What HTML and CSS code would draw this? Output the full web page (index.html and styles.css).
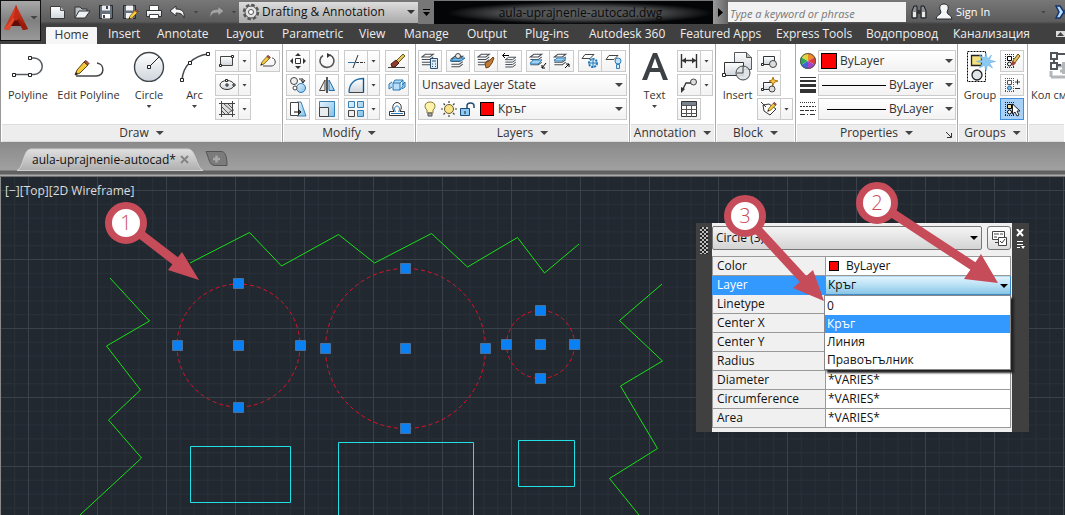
FILE: index.html
```html
<!DOCTYPE html>
<html lang="en">
<head>
<meta charset="utf-8">
<title>aula-uprajnenie-autocad.dwg</title>
<link rel="stylesheet" href="styles.css">
</head>
<body>
<svg class="defs" aria-hidden="true">
  <defs>
    <linearGradient id="steel" x1="0" y1="0" x2="0" y2="1"><stop offset="0" stop-color="#fff"/><stop offset="1" stop-color="#cfd5dc"/></linearGradient>
    <linearGradient id="sky" x1="0" y1="0" x2="1" y2="1"><stop offset="0" stop-color="#e6f4fd"/><stop offset="1" stop-color="#7fc0ea"/></linearGradient>
    <linearGradient id="flame" x1="0" y1="0" x2="1" y2="1"><stop offset="0" stop-color="#f2502e"/><stop offset="1" stop-color="#8c1206"/></linearGradient>
    <symbol id="pencil" viewBox="0 0 16 16"><path d="M1 15l2-5 7-8 4 3-8 8z" fill="#f3c93b" stroke="#5a4410"/><path d="M10 2l2-1.500 3 3-1.500 1.500z" fill="#b5584a" stroke="#5a2a20"/><path d="M1 15l1-3 2 2z" fill="#222"/></symbol>
    <symbol id="layers" viewBox="0 0 16 16"><path d="M5 1.500h9l-4 3H1zM1 7.500h9l4-3M1 10.500h9l4-3M1 13.500h9l4-3" fill="none" stroke="#444b52" stroke-width="1.200"/></symbol>
    <pattern id="grid" width="69" height="69" x="28" y="13" patternUnits="userSpaceOnUse">
      <path d="M14.300 0v69M28.100 0v69M41.900 0v69M55.700 0v69M0 14.300h69M0 28.100h69M0 41.900h69M0 55.700h69" stroke="#282f38"/>
      <path d="M.5 0v69M0 .5h69" stroke="#39414a"/>
    </pattern>
  </defs>
</svg>

<header class="top">
  <button class="app" aria-label="Application menu"><svg width="24" height="26" viewBox="0 0 24 26"><path d="M12 0L0 24l5 1 2-4h10l2 4 5-1z" fill="url(#flame)"/><path d="M12 0l-4 14-8 10 5 1 7-12z" fill="#e2472c"/><path d="M12 0l3 14 9 10-5 1-7-12z" fill="#9a1a0c"/><path d="M12 13l-5 8h10z" fill="#5f0d06"/><path d="M12 0L9 13l3 3 3-3z" fill="#c52a17"/></svg><i class="caret"></i></button>
  <div class="titlebar">
    <div class="quick">
      <button aria-label="New"><svg width="18" height="16"><path d="M1.500 2.500h10l4 4v8h-14z" fill="url(#steel)" stroke="#3a3a3a"/><path d="M11.500 2.500v4h4" fill="#bbb" stroke="#555"/></svg></button>
      <button aria-label="Open"><svg width="18" height="16"><path d="M2 14V3h5l2 2h5v3" fill="#b9c0c8" stroke="#333"/><path d="M2 14l4-7h11l-5 7z" fill="#eef1f4" stroke="#333"/></svg></button>
      <button aria-label="Save"><svg width="18" height="16"><path d="M2.500 1.500h13v13h-13z" fill="#65707c" stroke="#25292e"/><path d="M5 1.500h8v5H5z" fill="#eee"/><path d="M5 10h8v4.500H5z" fill="#fff"/><path d="M6 11h2v3H6zM9 2h2v3H9z" fill="#3d4650"/></svg></button>
      <button aria-label="Save as"><svg width="18" height="16"><path d="M2.500 1.500h12v13h-12z" fill="#65707c" stroke="#25292e"/><path d="M5 1.500h7v5H5zM5 9h7v5.500H5z" fill="#f4f4f4"/><use href="#pencil" x="7" y="5" width="11" height="11"/></svg></button>
      <button aria-label="Print"><svg width="18" height="16"><path d="M4.500 1.500h9v5h-9z" fill="#fff" stroke="#444"/><path d="M1.500 6.500h15v6h-15z" fill="url(#steel)" stroke="#333"/><path d="M4.500 10.500h9v4h-9z" fill="#fff" stroke="#444"/></svg></button>
      <button aria-label="Undo"><svg width="18" height="16"><path d="M1 7l6-5v3c6 0 9 3 8 9-1-4-4-5-8-5v3z" fill="#f2f4f6" stroke="#333"/></svg></button>
      <button class="tiny" aria-label="Undo list"><i class="caret small"></i></button>
      <button aria-label="Redo"><svg width="18" height="16"><path d="M17 7l-6-5v3c-6 0-9 3-8 9 1-4 4-5 8-5v3z" fill="#a4a4a4" stroke="#666"/></svg></button>
      <button class="tiny" aria-label="Redo list"><i class="caret small"></i></button>
    </div>
    <label class="workspace"><svg width="18" height="18" viewBox="0 0 18 18"><circle cx="9" cy="9" r="7" fill="none" stroke="#555" stroke-width="2.500" stroke-dasharray="3.500 2"/><circle cx="9" cy="9" r="6" fill="#e2e2e2" stroke="#555"/><circle cx="9" cy="9" r="2.500" fill="#fff" stroke="#555"/></svg><select aria-label="Workspace"><option>Drafting &amp; Annotation</option></select></label>
    <button class="customize" aria-label="Customize toolbar"><svg width="7" height="8"><path d="M0 1.500h7" stroke="#000"/><path d="M0 4h7L3.500 8z" fill="#000"/></svg></button>
    <h1 class="file">aula-uprajnenie-autocad.dwg</h1>
    <button class="next" aria-label="Expand search"><svg width="5" height="9"><path d="M0 0l5 4.500L0 9z"/></svg></button>
    <input class="search" type="search" placeholder="Type a keyword or phrase" aria-label="Search">
    <div class="account">
      <button aria-label="Find"><svg width="18" height="16"><path d="M2 14V7l2-5h3v12zM11 14V2h3l2 5v7z" fill="#8b8f94" stroke="#15181b"/><path d="M3 8h3v5H3zM12 8h3v5h-3z" fill="#e8e8e8"/><path d="M7 6h4v4H7z" fill="#333"/></svg></button>
      <button class="signin"><svg width="18" height="18"><path d="M6 9C3 3 6 1 9 1s6 2 3 8c0 3 5 3 5 7H1c0-4 5-4 5-7z" fill="#f3f5f7" stroke="#24282c"/></svg>Sign In</button>
      <button class="tiny end" aria-label="Account menu"><i class="caret small"></i></button>
      <button class="exchange" aria-label="Exchange"><svg width="14" height="14"><path d="M1 1h4l4 6-4 6H1l3-6z" fill="#b9dcff" stroke="#12366a" stroke-width="1.500"/><path d="M14 1h-2L9 7l3 6h2z" fill="#4c86cf" stroke="#12366a"/></svg></button>
    </div>
  </div>
  <nav class="tabs">
    <a class="on" href="#">Home</a><a href="#">Insert</a><a href="#">Annotate</a><a href="#">Layout</a><a href="#">Parametric</a><a href="#">View</a><a href="#">Manage</a><a href="#">Output</a><a href="#">Plug-ins</a><a href="#">Autodesk 360</a><a href="#">Featured Apps</a><a href="#">Express Tools</a><a href="#">Водопровод</a><a href="#">Канализация</a>
    <button class="fold" aria-label="Minimize ribbon"><svg width="7" height="4"><path d="M0 4h7L3.500 0z" fill="#444"/></svg></button>
  </nav>
</header>

<main>
<div class="ribbon">
  <section class="panel">
    <div class="body draw">
      <button class="big"><svg width="34" height="32"><path d="M3 24.500h16M19 8h4a8 8 0 0 1 0 16.500h-4" fill="none" stroke="#555b61" stroke-width="1.500"/><path d="M1.500 23.500h3v3h-3zM17.500 23.500h3v3h-3zM17.500 6.500h3v3h-3z" fill="#fff" stroke="#222"/></svg>Polyline</button>
      <button class="big"><svg width="34" height="32"><path d="M4 26h20c9 0 9-12 1-13" fill="none" stroke="#444" stroke-width="1.500"/><use href="#pencil" x="2" y="10" width="16" height="16"/></svg>Edit Polyline</button>
      <button class="big"><svg width="34" height="32"><circle cx="17" cy="17" r="14.500" fill="url(#steel)" stroke="#3f454b" stroke-width="1.400"/><path d="M17 17L27 7" stroke="#222"/><path d="M15.500 15.500h3v3h-3z" fill="#fff" stroke="#222"/></svg>Circle<i class="caret small"></i></button>
      <button class="big"><svg width="34" height="32"><path d="M4 30C5 16 15 6 30 4" fill="none" stroke="#444a50" stroke-width="1.500"/><path d="M2.500 28.500h3v3h-3zM10.500 11.500h3v3h-3zM28.500 2.500h3v3h-3z" fill="#fff" stroke="#222"/></svg>Arc<i class="caret small"></i></button>
      <div class="stack">
        <div class="split"><button aria-label="Rectangle"><svg width="18" height="16"><path d="M2.500 3.500h12v9h-12z" fill="url(#steel)" stroke="#444"/><path d="M1.500 11.500h2v2h-2zM13.500 2.500h2v2h-2z" fill="#fff" stroke="#222"/></svg></button><button aria-label="Rectangle list"><i class="caret small"></i></button></div>
        <div class="split"><button aria-label="Ellipse"><svg width="18" height="16"><ellipse cx="9" cy="8" rx="7" ry="4.500" fill="url(#steel)" stroke="#333"/><path d="M9 6v4M7 8h4" stroke="#222"/><path d="M7.500 2.500h2v2h-2zM15 7h2v2h-2z" fill="#fff" stroke="#222"/></svg></button><button aria-label="Ellipse list"><i class="caret small"></i></button></div>
        <div class="split"><button aria-label="Hatch"><svg width="18" height="16"><path d="M3.500 0v16M14.500 0v16M1 2.500h16M1 13.500h16" stroke="#444"/><path d="M4 3h10v6l-4 4H4z" fill="#ddd"/><path d="M4 6l7 7M4 10l3 3M6 3l8 7M10 3l4 4M10 13c1-2 3-3 6-4" stroke="#555" fill="none"/></svg></button><button aria-label="Hatch list"><i class="caret small"></i></button></div>
      </div>
      <div class="stack"><button class="tool" aria-label="Edit polyline"><svg width="18" height="16"><path d="M4 13h8c6 0 5-8 1-8" fill="none" stroke="#444"/><use href="#pencil" x="1" y="2" width="11" height="11"/></svg></button></div>
    </div>
    <h2>Draw <i class="caret"></i></h2>
  </section>

  <section class="panel">
    <div class="body modify">
      <div class="stack">
        <button class="tool" aria-label="Move"><svg width="18" height="16"><path d="M6.500 5.500h5v5h-5z" fill="#fff" stroke="#333"/><path d="M9 0l3 3H6zM9 16l3-3H6zM1 8l3-3v6zM17 8l-3-3v6z" fill="#333"/></svg></button>
        <button class="tool" aria-label="Copy"><svg width="18" height="16"><circle cx="5" cy="4" r="3.500" fill="#eee" stroke="#444"/><circle cx="12" cy="11" r="4.500" fill="url(#sky)" stroke="#2a78b4"/><circle cx="6" cy="11" r="2" fill="#fff" stroke="#444"/><path d="M10 2h4v3M12 3l2 3 2-3" fill="none" stroke="#222"/></svg></button>
        <button class="tool" aria-label="Stretch"><svg width="18" height="16"><path d="M8 1h4l5 14H8z" fill="url(#sky)" stroke="#3c83b8"/><path d="M1.500 1.500h8v13h-8z" fill="#fff" stroke="#444"/><path d="M5 11h6M9 8.500l3 2.500-3 2.500" fill="none" stroke="#000"/></svg></button>
      </div>
      <div class="stack">
        <button class="tool" aria-label="Rotate"><svg width="18" height="16"><path d="M5 2.500a7 6.500 0 1 0 7-.5" fill="none" stroke="#555" stroke-width="1.600"/><path d="M9 0v5l4-3z" fill="#333"/></svg></button>
        <button class="tool" aria-label="Mirror"><svg width="18" height="16"><path d="M7 3v10.500H1.500z" fill="#eee" stroke="#444"/><path d="M11 3v10.500h5.500z" fill="url(#sky)" stroke="#236ea8"/><path d="M9 0v16" stroke="#222" stroke-width="1.500"/></svg></button>
        <button class="tool" aria-label="Scale"><svg width="18" height="16"><path d="M1.500.5h15v15h-15z" fill="url(#sky)" stroke="#357fb5"/><path d="M1.500 6.500h9v9h-9z" fill="#e9edf0" stroke="#444"/></svg></button>
      </div>
      <div class="stack">
        <div class="split"><button aria-label="Trim"><svg width="18" height="16"><path d="M1 9.500h7" stroke="#2676b5"/><path d="M9 9.500h9" stroke="#333" stroke-dasharray="3 1"/><path d="M6 15l5-13" stroke="#333"/></svg></button><button aria-label="Trim list"><i class="caret small"></i></button></div>
        <div class="split"><button aria-label="Fillet"><svg width="18" height="16"><path d="M2 15.500C2 6 8 1.500 16.500 1.500v14" fill="url(#steel)" stroke="#2470a8" stroke-width="1.400"/><path d="M16.500 1v14.500H2" fill="none" stroke="#444"/></svg></button><button aria-label="Fillet list"><i class="caret small"></i></button></div>
        <div class="split"><button aria-label="Array"><svg width="18" height="16"><path d="M1.500.5h6v6h-6zM10.500.5h6v6h-6zM10.500 9.500h6v6h-6z" fill="url(#sky)" stroke="#357fb5"/><path d="M1.500 9.500h6v6h-6z" fill="#eee" stroke="#444"/></svg></button><button aria-label="Array list"><i class="caret small"></i></button></div>
      </div>
      <div class="stack">
        <button class="tool" aria-label="Erase"><svg width="18" height="16"><path d="M0 14.500h17" stroke="#444"/><path d="M8 8l7-7 2 2-7 7z" fill="#e3c65f" stroke="#6b5520"/><path d="M3 11l5-4 3 3-4 4H4z" fill="#8e3b2d" stroke="#4a1c14"/></svg></button>
        <button class="tool" aria-label="Explode"><svg width="18" height="16"><path d="M5 6h7v7H5zM5 6l2-3h8l-3 3M12 13l3-4V3M4 5L1 7v5l3-2M14 8l3-3v5l-3 2" fill="#b9defa" stroke="#2676b5"/></svg></button>
        <button class="tool" aria-label="Offset"><svg width="18" height="16"><path d="M1.500 14.500h15v-4h-4.500c3-5 0-9-3-9s-6 4-3 9H1.500z" fill="#fff" stroke="#333"/><path d="M3 12.500h12M7.500 11c-2-3-.5-6 1.500-6s3.500 3 1.500 6" fill="none" stroke="#2676b5"/></svg></button>
      </div>
    </div>
    <h2>Modify <i class="caret"></i></h2>
  </section>

  <section class="panel">
    <div class="body layers">
      <div class="line">
        <button class="tool" aria-label="Layer properties"><svg width="18" height="16"><use href="#layers" width="14" height="14"/><path d="M9.500 5.500h7v10h-7z" fill="#dcecf8" stroke="#2b4f70"/><path d="M11 8h4M11 11h1m2 0h1m-4 2.500h1m2 0h1" stroke="#2b4f70"/></svg></button>
        <button class="tool" aria-label="Make current"><svg width="18" height="16"><use href="#layers" x="1" y="2" width="15" height="14"/><path d="M5 5h11l-4 3H1z" fill="#74bdee" stroke="#236ea8"/><circle cx="9" cy="3" r="2.500" fill="#eee" stroke="#444"/></svg></button>
        <div class="pair"><button class="tool" aria-label="Match layer"><svg width="18" height="16"><use href="#layers" width="14" height="14"/><path d="M8 10l4-2 4-4 1 1-2 5-3 4-3 1z" fill="#c07a31" stroke="#74410f"/></svg></button><button class="tool" aria-label="Previous layer"><svg width="18" height="16"><use href="#layers" x="3" y="3" width="14" height="13"/><path d="M2 2.500h6M4 0L1.500 2.500 4 5" fill="none" stroke="#000"/></svg></button></div>
        <div class="pair"><button class="tool" aria-label="Isolate"><svg width="18" height="16"><use href="#layers" width="15" height="14"/><path d="M4 7h9l-4 4H1z" fill="#9dd2f5" stroke="#3a87bf"/><path d="M17 10l-4 5m0-3v3h3" fill="none" stroke="#000"/></svg></button><button class="tool" aria-label="Unisolate"><svg width="18" height="16"><use href="#layers" width="15" height="14"/><path d="M4 5h9l-4 3H1z" fill="#9dd2f5" stroke="#3a87bf"/><path d="M12 15l4-4m-3 0h3v3" fill="none" stroke="#000"/></svg></button></div>
        <div class="pair"><button class="tool" aria-label="Freeze"><svg width="18" height="16"><path d="M4 1.500h9l-4 4H1z" fill="#fff" stroke="#444"/><circle cx="12" cy="10" r="4" fill="#d9effc" stroke="#2676b5" stroke-width="2" stroke-dasharray="2 1"/><path d="M12 5v10M7 10h10" stroke="#2676b5"/></svg></button><button class="tool" aria-label="Layer off"><svg width="18" height="16"><path d="M4 2.500h9l-4 4H1z" fill="#fff" stroke="#444"/><circle cx="13" cy="8" r="3" fill="#bfe2fa" stroke="#2e7cb5"/><path d="M11.500 11.500h3v4h-3z" fill="#d9effc" stroke="#2e7cb5"/></svg></button></div>
      </div>
      <label class="combo"><select aria-label="Layer state"><option>Unsaved Layer State</option></select></label>
      <label class="combo"><svg width="54" height="18"><path d="M8 2c-6 0-6 6-3 8v3h6v-3c3-2 3-8-3-8z" fill="#fff3ab" stroke="#8b7a38"/><path d="M6 13h4v3H6z" fill="#aaa" stroke="#555"/><circle cx="27" cy="9" r="4.500" fill="#fbe487" stroke="#665a2c"/><path d="M27 1v2M27 15v2M19 9h2M33 9h2M21.500 3.500l1.500 1.500M31 13l1.500 1.500M32.500 3.500L31 5M23 13l-1.500 1.500" stroke="#444" stroke-width="1.200"/><path d="M38.500 8.500h9v7h-9z" fill="#8dcbf5" stroke="#1b4c75"/><path d="M45 8V6c0-4 7-4 7 0v2" fill="none" stroke="#234a6a" stroke-width="1.500"/><path d="M43 11v3" stroke="#123"/></svg><i class="swatch"></i><select aria-label="Layer"><option>Кръг</option></select></label>
    </div>
    <h2>Layers <i class="caret"></i></h2>
  </section>

  <section class="panel">
    <div class="body pairbody">
      <button class="big"><svg width="34" height="32"><path d="M4 30L15 3h4l11 27h-5l-3-8H12l-3 8zM13.500 18h7L17 8z" fill="#3c4146"/></svg>Text<i class="caret small"></i></button>
      <div class="stack">
        <div class="split"><button aria-label="Dimension"><svg width="18" height="16"><path d="M1.500 1v14M16.500 1v14M2 7.500h14" stroke="#333" stroke-width="1.400"/><path d="M2 7.500l4-3v6zM16 7.500l-4-3v6z" fill="#333"/></svg></button><button aria-label="Dimension list"><i class="caret small"></i></button></div>
        <div class="split"><button aria-label="Leader"><svg width="18" height="16"><path d="M2 14l4-8h5" fill="none" stroke="#333" stroke-width="1.300"/><path d="M1 16V10l4 2z" fill="#333"/><circle cx="13.500" cy="5" r="3" fill="#ddd" stroke="#444"/></svg></button><button aria-label="Leader list"><i class="caret small"></i></button></div>
        <button class="tool" aria-label="Table"><svg width="18" height="16"><path d="M1.500.5h15v15h-15z" fill="#fff" stroke="#333"/><path d="M2 1h14v3H2z" fill="#78838d"/><path d="M1 4.500h16M1 8.500h16M1 12.500h16M6.500 4v12M11.500 4v12" stroke="#555"/></svg></button>
      </div>
    </div>
    <h2>Annotation <i class="caret"></i></h2>
  </section>

  <section class="panel">
    <div class="body pairbody block">
      <button class="big"><svg width="34" height="32"><path d="M13.500 2.500h12l5 5v12h-17z" fill="url(#steel)" stroke="#555b61"/><path d="M25.500 2.500v5h5" fill="#bbb" stroke="#555"/><path d="M3.500 12.500h19v13h-19z" fill="url(#steel)" stroke="#333"/><circle cx="22" cy="23" r="7" fill="#dde1e5" fill-opacity=".9" stroke="#444"/><path d="M22 16v7h-6" fill="none" stroke="#444"/><path d="M1.500 23.500h3v3h-3z" fill="#fff" stroke="#222"/></svg>Insert</button>
      <div class="stack">
        <button class="tool" aria-label="Create block"><svg width="18" height="16"><path d="M3.500 3.500h11v8h-11z" fill="url(#steel)" stroke="#333"/><circle cx="13" cy="11" r="3.500" fill="#ddd" stroke="#444"/><path d="M1.500 10.500h2v2h-2z" fill="#fff" stroke="#222"/></svg></button>
        <button class="tool" aria-label="Edit block"><svg width="18" height="16"><path d="M3.500 5.500h9v7h-9z" fill="url(#steel)" stroke="#333"/><circle cx="12" cy="12" r="3" fill="#ddd" stroke="#444"/><path d="M13 0l1 3 4 1-4 1.500-1 3-1-3-3-1.500 3-1z" fill="#f7c845" stroke="#b27c12"/><path d="M1.500 11.500h2v2h-2z" fill="#fff" stroke="#222"/></svg></button>
        <div class="split"><button aria-label="Attributes"><svg width="18" height="16"><path d="M3 4l6-1 7 5-6 6-6-4z" fill="#fff" stroke="#333"/><path d="M1 1l5 5" stroke="#333"/><use href="#pencil" x="7" y="1" width="10" height="10"/></svg></button><button aria-label="Attributes list"><i class="caret small"></i></button></div>
      </div>
    </div>
    <h2>Block <i class="caret"></i></h2>
  </section>

  <section class="panel">
    <div class="body props">
      <svg width="16" height="16" viewBox="-8 -8 16 16"><path d="M0 0V-8A8 8 0 0 1 7-4z" fill="#f08a28"/><path d="M0 0l7-4a8 8 0 0 1 0 8z" fill="#e23b3b"/><path d="M0 0l7 4a8 8 0 0 1-7 4z" fill="#a742c4"/><path d="M0 0v8a8 8 0 0 1-7-4z" fill="#3f66d8"/><path d="M0 0l-7 4a8 8 0 0 1 0-8z" fill="#32a95a"/><path d="M0 0l-7-4a8 8 0 0 1 7-4z" fill="#dcd340"/><circle r="7.500" fill="none" stroke="#555"/></svg>
      <label class="combo"><i class="swatch wide"></i><select aria-label="Object color"><option>ByLayer</option></select></label>
      <svg width="16" height="16"><path d="M0 .5h16" stroke="#333"/><path d="M0 4h16" stroke="#333" stroke-width="2"/><path d="M0 8.500h16" stroke="#333" stroke-width="3"/><path d="M0 14h16" stroke="#333" stroke-width="4"/></svg>
      <label class="combo"><i class="rule"></i><select aria-label="Lineweight"><option>ByLayer</option></select></label>
      <svg width="16" height="16"><path d="M0 1.500h16" stroke="#333" stroke-dasharray="1 1"/><path d="M0 5.500h16" stroke="#333" stroke-dasharray="2 1"/><path d="M0 9.500h16" stroke="#333" stroke-dasharray="4 1"/><path d="M0 13.500h16" stroke="#333" stroke-dasharray="5 2 1 2"/></svg>
      <label class="combo"><i class="rule short"></i><select aria-label="Linetype"><option>ByLayer</option></select></label>
    </div>
    <h2>Properties <i class="caret"></i><svg class="launch" width="6" height="6"><path d="M0 0l5 5M5.500 1v4.500H1" fill="none" stroke="#333"/></svg></h2>
  </section>

  <section class="panel">
    <div class="body pairbody groups">
      <button class="big"><svg width="34" height="32"><path d="M4.500 1.500h18v30h-18z" fill="none" stroke="#000" stroke-dasharray="2 1"/><path d="M8.500 5.500h10v10h-10z" fill="#f4df7c" stroke="#222" stroke-width="1.300"/><circle cx="14" cy="25" r="5" fill="#dfe4e8" stroke="#222" stroke-width="1.300"/><path d="M23 3l1.500 6 4-4-2 5 6 1.500-6 1.500 3 5-5-3-1.500 6-1.500-6-5 3 3-5-6-1.500 6-1.500-3-5 5 3z" fill="#8cc9f2" stroke="#5fa6d8" stroke-width=".5"/></svg>Group</button>
      <div class="stack">
        <button class="tool" aria-label="Ungroup"><svg width="18" height="16"><path d="M2 1.500h9M2 14.500h9M2.500 1v14M10.500 1v14" stroke="#333" stroke-dasharray="1 1"/><path d="M4.500 3.500h4v4h-4z" fill="#fff" stroke="#000"/><circle cx="6.500" cy="11" r="2" fill="#fff" stroke="#000"/><path d="M9 9l6-8 2 2-6 8z" fill="#e5c555" stroke="#6a511c"/><path d="M8 11l2-3 3 2-3 3z" fill="#a14334"/></svg></button>
        <button class="tool" aria-label="Edit group"><svg width="18" height="16"><path d="M2 1.500h9M2 14.500h9M2.500 1v14M10.500 1v14" stroke="#555" stroke-dasharray="1 1"/><path d="M4.500 3.500h4v4h-4z" fill="#fff" stroke="#555"/><circle cx="6.500" cy="11" r="2" fill="#7fc0ea" stroke="#1e66a0"/><path d="M12 5h5M14.500 2.500v5M12 11.500h5" stroke="#333"/></svg></button>
        <button class="tool active" aria-label="Group selection" aria-pressed="true"><svg width="18" height="16"><path d="M2 1.500h9M2 14.500h9M2.500 1v14M10.500 1v14" stroke="#222" stroke-dasharray="1 1"/><path d="M4.500 3.500h4v4h-4z" fill="#e8dfa0" stroke="#000"/><circle cx="6.500" cy="11" r="2" fill="#fff" stroke="#000"/><path d="M9.500 3v10l2.500-2 2 4 2-1-2-4h3z" fill="#fff" stroke="#222"/></svg></button>
      </div>
    </div>
    <h2>Groups <i class="caret"></i></h2>
  </section>

  <section class="panel last">
    <div class="body"><button class="big"><svg width="18" height="32"><path d="M2 27v-6M2 27h16M11 21h7M14.500 12v12M8 16h10" fill="none" stroke="#b4b7ba" stroke-width="3"/><path d="M2 3h6v6H2zM2 13h6v6H2zM5 9v4M8 4h10M8 15h4" fill="none" stroke="#50565c" stroke-width="2"/></svg>Кол см</button></div>
    <h2></h2>
  </section>
</div>

<div class="docs">
  <a class="doc" href="#"><svg class="shape" viewBox="0 0 186 23" preserveAspectRatio="none"><defs><linearGradient id="tabfill" x1="0" y1="0" x2="0" y2="1"><stop offset="0" stop-color="#e0e0e0"/><stop offset="1" stop-color="#aeaeae"/></linearGradient></defs><path d="M0 22.500C7 20 6 1 14 1h157c8 0 8 19 15 21.500z" fill="url(#tabfill)" stroke="#d0d0d0"/></svg><span>aula-uprajnenie-autocad*</span><svg width="9" height="9"><path d="M1 1l7 7M8 1L1 8" stroke="#858585" stroke-width="2"/></svg></a>
  <button class="add" aria-label="New drawing"><svg width="24" height="17"><path d="M1 1.500h15c4 0 6 4 6 14H10C4 15.500 4 8 1 1.500z" fill="#7b7b7b" stroke="#555"/><path d="M8 9h7M11.500 5.500v7" stroke="#a8a8a8" stroke-width="2.500"/></svg></button>
</div>

<section class="canvas" aria-label="Drawing">
  <svg class="drawing">
    <rect width="100%" height="100%" fill="url(#grid)"/>
    <g transform="translate(0,-177)" fill="none">
      <g stroke="#16e016">
        <path d="M110 278l39.500 43-43 25 34 44-32 30 33 38L80 515"/>
        <path d="M190 263l59.500-30.500 32 33.500 57-31.500 36 28.500 57-29.500 36 33.500 50-29.500 27 35.500L579 244"/>
        <path d="M662 284l-42.500 36.500 43 40.500-42 25 37 62.500-48 30L639 515"/>
      </g>
      <g stroke="#e01228" stroke-dasharray="4 3"><circle cx="238.500" cy="345.500" r="61.500"/><circle cx="405.500" cy="348.500" r="80"/><circle cx="540.500" cy="344.500" r="34"/></g>
      <path d="M190.500 446.500h100v56h-100zM338.500 520v-77.500h135V520M518.500 440.500h56v46h-56z" stroke="#23dfe6"/>
      <g fill="#0a80f5" stroke="#4a6f98">
        <path d="M233.500 278.500h10v10h-10zM172.500 340.500h10v10h-10zM233.500 340.500h10v10h-10zM295.500 340.500h10v10h-10zM233.500 402.500h10v10h-10z"/>
        <path d="M400.500 263.500h10v10h-10zM320.500 343.500h10v10h-10zM400.500 343.500h10v10h-10zM480.500 343.500h10v10h-10zM400.500 423.500h10v10h-10z"/>
        <path d="M535.500 305.500h10v10h-10zM501.500 339.500h10v10h-10zM535.500 339.500h10v10h-10zM569.500 339.500h10v10h-10zM535.500 373.500h10v10h-10z"/>
      </g>
    </g>
  </svg>
  <p class="view">[−][Top][2D Wireframe]</p>

  <aside class="palette">
    <div class="grip"></div>
    <div class="sheet">
      <div class="pick">
        <label class="combo object"><select aria-label="Selection"><option>Circle (3)</option></select></label>
        <button class="toggle" aria-label="Quick select"><svg width="17" height="17"><path d="M1.500 1.500h12v8h-12z" fill="#fff" stroke="#444"/><path d="M3 4h5M3 7h3M9 4h3" stroke="#444"/><path d="M4 12.500h3" stroke="#444"/><path d="M7.500 7.500h8v8h-8z" fill="#fff" stroke="#444"/><path d="M9 11l2 2 3-4" fill="none" stroke="#444"/></svg></button>
      </div>
      <table>
        <tr><th>Color</th><td><i class="chip"></i>ByLayer</td></tr>
        <tr class="sel"><th>Layer</th><td>Кръг<i class="caret dark"></i></td></tr>
        <tr><th>Linetype</th><td></td></tr>
        <tr><th>Center X</th><td></td></tr>
        <tr><th>Center Y</th><td></td></tr>
        <tr><th>Radius</th><td></td></tr>
        <tr><th>Diameter</th><td>*VARIES*</td></tr>
        <tr><th>Circumference</th><td>*VARIES*</td></tr>
        <tr><th>Area</th><td>*VARIES*</td></tr>
      </table>
      <ul class="menu" role="listbox" aria-label="Layer"><li role="option">0</li><li class="hot" role="option" aria-selected="true">Кръг</li><li role="option">Линия</li><li role="option">Правоъгълник</li></ul>
    </div>
    <div class="edge">
      <button aria-label="Close"><svg width="9" height="8"><path d="M1 0l6 7M7 0L1 7" stroke="#fff" stroke-width="2"/></svg></button>
      <button aria-label="Menu"><svg width="9" height="8"><path d="M1 .5h6M1 3.500h6M1 6.500h3" stroke="#fff"/><path d="M5 5h4L7 8z" fill="#fff"/></svg></button>
    </div>
  </aside>

  <svg class="callouts">
    <g transform="translate(0,-177)">
      <g stroke="#c74c5a" stroke-width="9"><path d="M126 223l52 40M877 203l99 65M745 216l60 65"/></g>
      <path d="M199 280l-31-10 14-18zM998 283l-34-4 17-25zM824 301l-31-13 20-18z" fill="#c74c5a"/>
      <g fill="#fff" stroke="#c74c5a" stroke-width="7"><circle cx="126" cy="223" r="17.500"/><circle cx="877" cy="203" r="17.500"/><circle cx="745" cy="216" r="17.500"/></g>
      <g class="num"><text x="126" y="230">1</text><text x="877" y="210">2</text><text x="745" y="223">3</text></g>
    </g>
  </svg>
</section>
</main>
</body>
</html>
```
FILE: styles.css
```css
* { box-sizing: border-box; }
body { margin: 0; height: 100vh; overflow: hidden; display: flex; flex-direction: column; background: #222830; color: #333; font: 11px/16px "Open Sans", "Noto Sans", sans-serif; }
main { flex: 1; display: flex; flex-direction: column; min-height: 0; }
button { margin: 0; padding: 0; border: 0; background: none; color: inherit; font: inherit; display: flex; align-items: center; justify-content: center; }
a { color: inherit; text-decoration: none; }
svg { display: block; flex: none; }
select { appearance: none; flex: 1; min-width: 0; border: 0; padding: 0; background: none; color: inherit; font: inherit; outline: 0; }
.defs { position: absolute; width: 0; height: 0; }
.caret { flex: none; width: 8px; height: 4px; background: #444; clip-path: polygon(0 0, 100% 0, 50% 100%); }
.caret.small { width: 5px; height: 3px; }
.caret.dark { background: #000; }

.top { display: grid; grid-template-columns: 41px 1fr; grid-template-rows: 24px 20px; background: #404040; }
.app { grid-row: 1 / 3; gap: 2px; height: 41px; padding: 0 1px 6px 2px; border: 1px solid #111; background: linear-gradient(#a8a8a8, #808080 50%, #999); }
.titlebar { display: flex; align-items: center; background: linear-gradient(#777, #5c5c5c 90%, #404040); min-width: 0; }
.quick { width: 198px; flex: none; display: flex; align-items: center; padding-left: 8px; gap: 6px; }
.quick .tiny { width: 6px; }
.quick .tiny + button { margin-left: 2px; }
.workspace { width: 179px; height: 21px; flex: none; display: flex; align-items: center; gap: 2px; padding: 0 3px; background: linear-gradient(#ddd, #a9a9a9); color: #111; font-size: 12px; }
.workspace::after { content: ""; width: 8px; height: 4px; background: #333; clip-path: polygon(0 0, 100% 0, 50% 100%); }
.customize { width: 16px; height: 24px; flex: none; background: #777; }
.file { width: 279px; height: 23px; flex: none; margin: 0; background: radial-gradient(ellipse closest-side at 146px 12px, #606264, #484a4c 60%, #030507) #030507; color: #0a0a0a; font-size: 12px; line-height: 24px; font-weight: 400; text-align: center; padding-left: 14px; white-space: nowrap; }
.next { width: 15px; height: 24px; flex: none; background: linear-gradient(90deg, #999, #666); }
.search { width: 178px; height: 20px; flex: none; border: 0; padding: 2px 2px 0; background: #f2f2f2; font: italic 11px "Open Sans", sans-serif; outline: 0; }
.search::placeholder { color: #777; }
.account { flex: 1; display: flex; align-items: center; padding-left: 4px; gap: 7px; min-width: 0; }
.signin { gap: 3px; color: #fff; }
.account .end { margin-left: auto; }
.account svg, .account button { flex: none; }
.exchange { width: 10px; margin-left: 2px; overflow: hidden; justify-content: flex-start; }
.tabs { display: grid; grid-template-columns: 62px 49px 69px 56px 77px 45px 63px 58px 64px 91px 96px 90px 87px 1fr 9px; color: #eee; font-size: 12px; line-height: 20px; padding-left: 5px; white-space: nowrap; min-width: 0; }
.tabs .on { margin: 3px 11px 0 0; line-height: 16px; text-align: center; color: #333; background: #f6f6f6; border-radius: 1px 1px 0 0; }
.fold { height: 6px; align-self: center; background: #ddd; }

.ribbon { flex: none; display: grid; grid-template-columns: 282px 133px 214px 86px 80px 162px 70px 1fr; background: #fff; border-left: 1px solid #999; border-bottom: 1px solid #888; overflow: hidden; }
.panel { min-width: 0; border-right: 1px solid #aaa; display: flex; flex-direction: column; }
.panel h2 { position: relative; margin: 0 1px; height: 18px; display: flex; align-items: center; justify-content: center; gap: 7px; background: #ededed; border-top: 1px solid #ddd; border-bottom: 1px solid #ddd; font-size: 12px; font-weight: 400; }
.body { height: 80px; padding: 6px 2px 0; display: flex; overflow: hidden; }
.big { flex: none; height: 66px; flex-direction: column; justify-content: flex-start; white-space: nowrap; font-size: 11px; }
.big svg { margin-bottom: 5px; }
.big .caret { margin-top: 2px; }
.draw .big:nth-child(1) { width: 50px; }
.draw .big:nth-child(2) { width: 71px; }
.draw .big:nth-child(3) { width: 50px; }
.draw .big:nth-child(4) { width: 41px; }
.stack { flex: none; display: flex; flex-direction: column; gap: 2px; }
.stack + .stack { margin-left: 5px; }
.tool, .split { height: 22px; border: 1px solid #cbcbcb; background: linear-gradient(#fff, #f2f2f2); }
.tool { width: 24px; flex: none; }
.tool.active { background: #a9d1f7; border: 1px solid #3f8fdc; }
.split { width: 36px; display: flex; }
.split button:first-child { flex: 1; border-right: 1px solid #cbcbcb; }
.split button:last-child { width: 11px; }
.modify { padding-left: 3px; }
.pair { display: flex; }
.pair .tool + .tool { border-left: 0; }
.layers { flex-direction: column; gap: 2px; }
.line { display: flex; gap: 4px; }
.combo { height: 22px; display: flex; align-items: center; padding: 0 3px; gap: 4px; border: 1px solid #cbcbcb; background: linear-gradient(#fff, #f2f2f2); }
.combo::after { content: ""; flex: none; width: 8px; height: 4px; background: #444; clip-path: polygon(0 0, 100% 0, 50% 100%); }
.layers .combo { font-size: 12px; }
.swatch { flex: none; width: 14px; height: 14px; background: #f00; border: 1px solid #000; }
.swatch.wide { width: 16px; height: 16px; }
.pairbody .big { width: 45px; }
.block .big { width: 39px; }
.groups .big { width: 40px; }
.props { display: grid; grid-template-columns: 16px 1fr; grid-auto-rows: 22px; gap: 2px; padding-left: 4px; align-items: center; font-size: 12px; padding-right: 1px; }
.props .combo { gap: 3px; padding: 0 2px; }
.rule { flex: none; width: 64px; height: 1px; margin-left: 1px; background: #000; }
.rule.short { width: 59px; margin-left: 6px; }
.launch { position: absolute; right: 4px; top: 7px; }
.last .body { padding: 6px 0 0 3px; }
.last { border-right: 0; }
.last .big { align-items: flex-end; }

.docs { flex: none; height: 34px; display: flex; padding: 5px 0 0 17px; gap: 2px; background: linear-gradient(#8b8b8b, #a0a0a0 27px, #606060 28px, #606060 31px, #aaa 32px, #aaa 33px, #333 34px); }
.doc { position: relative; width: 186px; height: 23px; display: flex; align-items: center; gap: 4px; padding-left: 15px; color: #111; font-size: 12px; white-space: nowrap; }
.doc .shape { position: absolute; inset: 0; width: 100%; height: 100%; }
.doc span, .doc .shape + span + svg { position: relative; }
.add { align-self: flex-start; padding-top: 2px; }

.canvas { position: relative; flex: 1; min-height: 0; overflow: hidden; border-left: 1px solid #888; }
.drawing, .callouts { position: absolute; inset: 0 0 0 -1px; width: calc(100% + 1px); height: 100%; }
.callouts { pointer-events: none; }
.num { font: 300 20px "Open Sans", sans-serif; fill: #c74c5a; text-anchor: middle; }
.view { position: relative; margin: 6px 0 0 4px; color: #ddd; font-size: 12px; }
.palette { position: absolute; left: 695px; top: 46px; width: 333px; display: flex; background: #404040; color: #111; }
.grip { width: 8px; height: 27px; margin: 4px 4px 0; background: conic-gradient(#bbb 25%, #222 0 50%, #bbb 0 75%, #222 0) 0 0 / 4px 4px; }
.sheet { position: relative; flex: 1; background: #f0f0f0; padding: 3px 1px 4px 0; }
.pick { display: flex; gap: 5px; padding-bottom: 6px; }
.object { flex: 1; height: 24px; border: 1px solid #777; border-radius: 2px; background: linear-gradient(#f4f4f4, #d4d4d4); font-size: 12px; }
.object::after { background: #000; }
.toggle { width: 24px; height: 24px; border: 1px solid #777; border-radius: 3px; background: linear-gradient(#fff, #ddd); }
table { width: 100%; border-collapse: collapse; table-layout: fixed; font-size: 12px; line-height: 16px; border: 1px solid #888; }
tr { height: 19px; }
th, td { padding: 0 4px; border: 1px solid #999; font-weight: 400; text-align: left; white-space: nowrap; }
th { width: 113px; }
td { padding: 0 2px; background: #fff; }
.chip { display: inline-block; width: 10px; height: 10px; margin: 0 7px 0 1px; vertical-align: -1px; background: #f00; border: 1px solid #000; }
.sel th { background: #3399ff; color: #fff; border-color: #3399ff; }
.sel td { background: linear-gradient(#e2f4fc, #b7e0f5 50%, #86c3e4); border-color: #3c8ccb; }
.sel .caret { float: right; margin: 7px 0 0; }
.menu { position: absolute; left: 112px; right: 1px; top: 72px; margin: 0; padding: 1px 0 0; list-style: none; background: #fff; border: 1px solid #888; box-shadow: 3px 3px 2px #222; font-size: 12px; line-height: 18px; }
.menu li { padding-left: 2px; }
.menu .hot { background: #3399ff; color: #fff; }
.edge { width: 17px; padding-top: 6px; display: flex; flex-direction: column; align-items: center; gap: 4px; }
```
